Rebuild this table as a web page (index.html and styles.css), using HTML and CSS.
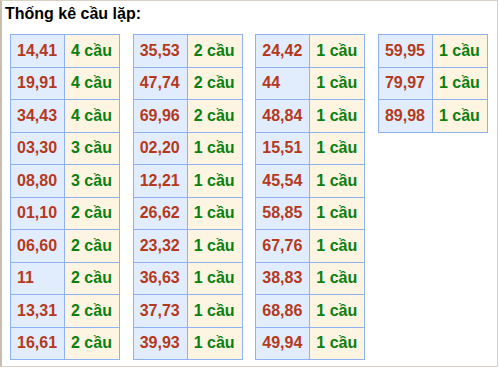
FILE: index.html
```html
<!DOCTYPE html>
<html lang="vi">
<head>
<meta charset="utf-8">
<title>Thống kê cầu lặp</title>
<link rel="stylesheet" href="styles.css">
</head>
<body>
<div class="box">
  <div class="title">Thống kê cầu lặp:</div>
  <div class="tables">
    <table class="stat">
      <tr><td class="num">14,41</td><td class="cnt">4 cầu</td></tr>
      <tr><td class="num">19,91</td><td class="cnt">4 cầu</td></tr>
      <tr><td class="num">34,43</td><td class="cnt">4 cầu</td></tr>
      <tr><td class="num">03,30</td><td class="cnt">3 cầu</td></tr>
      <tr><td class="num">08,80</td><td class="cnt">3 cầu</td></tr>
      <tr><td class="num">01,10</td><td class="cnt">2 cầu</td></tr>
      <tr><td class="num">06,60</td><td class="cnt">2 cầu</td></tr>
      <tr><td class="num">11</td><td class="cnt">2 cầu</td></tr>
      <tr><td class="num">13,31</td><td class="cnt">2 cầu</td></tr>
      <tr><td class="num">16,61</td><td class="cnt">2 cầu</td></tr>
    </table>
    <table class="stat">
      <tr><td class="num">35,53</td><td class="cnt">2 cầu</td></tr>
      <tr><td class="num">47,74</td><td class="cnt">2 cầu</td></tr>
      <tr><td class="num">69,96</td><td class="cnt">2 cầu</td></tr>
      <tr><td class="num">02,20</td><td class="cnt">1 cầu</td></tr>
      <tr><td class="num">12,21</td><td class="cnt">1 cầu</td></tr>
      <tr><td class="num">26,62</td><td class="cnt">1 cầu</td></tr>
      <tr><td class="num">23,32</td><td class="cnt">1 cầu</td></tr>
      <tr><td class="num">36,63</td><td class="cnt">1 cầu</td></tr>
      <tr><td class="num">37,73</td><td class="cnt">1 cầu</td></tr>
      <tr><td class="num">39,93</td><td class="cnt">1 cầu</td></tr>
    </table>
    <table class="stat">
      <tr><td class="num">24,42</td><td class="cnt">1 cầu</td></tr>
      <tr><td class="num">44</td><td class="cnt">1 cầu</td></tr>
      <tr><td class="num">48,84</td><td class="cnt">1 cầu</td></tr>
      <tr><td class="num">15,51</td><td class="cnt">1 cầu</td></tr>
      <tr><td class="num">45,54</td><td class="cnt">1 cầu</td></tr>
      <tr><td class="num">58,85</td><td class="cnt">1 cầu</td></tr>
      <tr><td class="num">67,76</td><td class="cnt">1 cầu</td></tr>
      <tr><td class="num">38,83</td><td class="cnt">1 cầu</td></tr>
      <tr><td class="num">68,86</td><td class="cnt">1 cầu</td></tr>
      <tr><td class="num">49,94</td><td class="cnt">1 cầu</td></tr>
    </table>
    <table class="stat">
      <tr><td class="num">59,95</td><td class="cnt">1 cầu</td></tr>
      <tr><td class="num">79,97</td><td class="cnt">1 cầu</td></tr>
      <tr><td class="num">89,98</td><td class="cnt">1 cầu</td></tr>
    </table>
  </div>
</div>
</body>
</html>
```
FILE: styles.css
```css
html, body {
  margin: 0;
  padding: 0;
  background: #ffffff;
}

body {
  font-family: "Liberation Sans", Arial, sans-serif;
}

.box {
  box-sizing: border-box;
  width: 498px;
  height: 367px;
  border-top: 1px solid #d8d0c4;
  border-right: 1px solid #d8d0c4;
  border-bottom: 1px solid #d8d0c4;
  border-left: 2px solid #c8bead;
  padding: 4px 0 0 3px;
}

.title {
  font-size: 16px;
  font-weight: bold;
  line-height: 18px;
  color: #000000;
}

.tables {
  display: flex;
  align-items: flex-start;
  gap: 12.67px;
  margin-top: 11px;
  padding-left: 5px;
}

.stat {
  border-collapse: collapse;
  width: 110px;
  flex: none;
}

.stat tr {
  height: 32.5px;
}

.stat td {
  border: 1px solid #8fb1f2;
  padding: 0 0 0 6px;
  font-size: 16px;
  font-weight: bold;
  line-height: 18px;
  vertical-align: middle;
  white-space: nowrap;
}

.stat .num {
  width: 47px;
  background: #e1edfd;
  color: #b5391c;
}

.stat .cnt {
  background: #fdf4e2;
  color: #0a8010;
}
```
